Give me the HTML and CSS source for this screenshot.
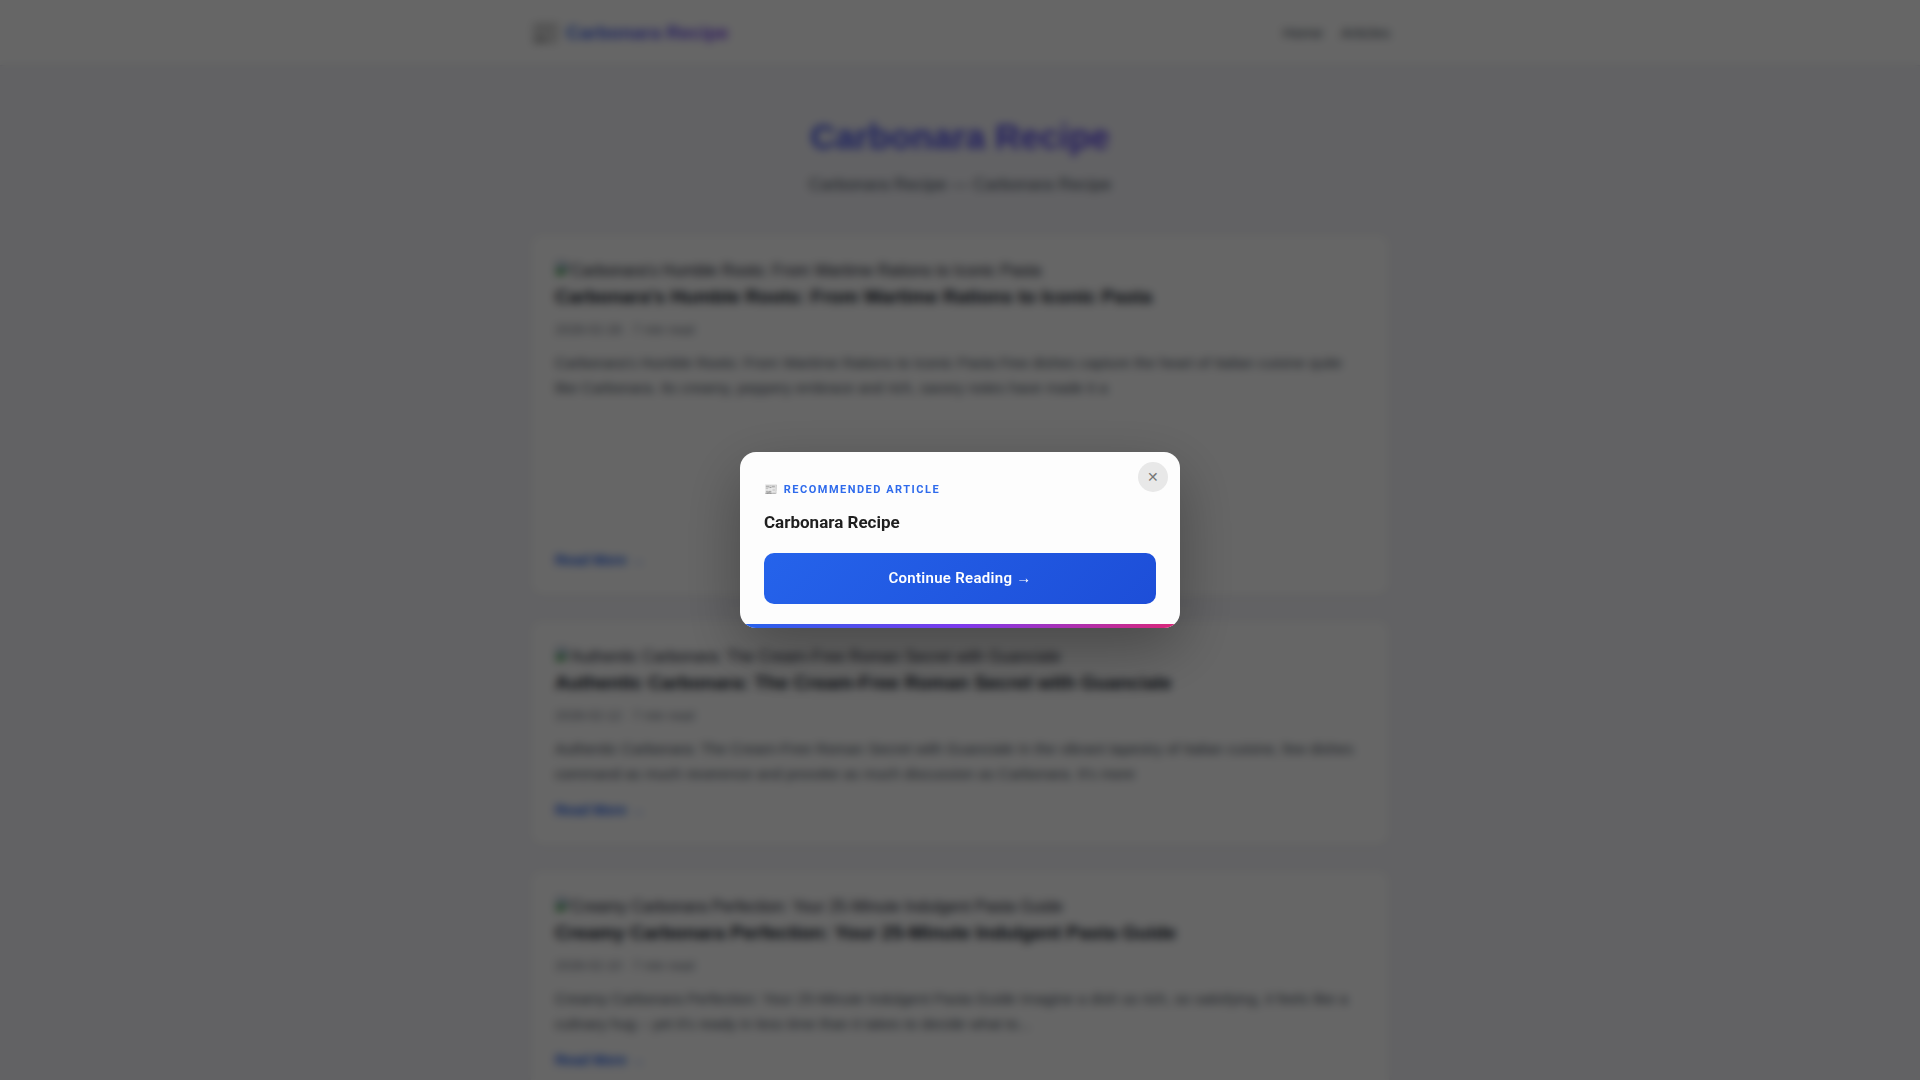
FILE: index.html
```html
<!DOCTYPE html>
<html lang="en">
<head>
    <meta charset="UTF-8">
    <meta name="viewport" content="width=device-width, initial-scale=1.0">
    <title>Carbonara Recipe</title>
    <link rel="stylesheet" href="styles.css">
</head>
<body>
    <!-- Shared placeholder for missing article images -->
    <svg class="sprite" aria-hidden="true">
        <symbol id="missing-image" viewBox="0 0 16 16">
            <path d="M1.5 1.5h9l4 4v9h-13z" fill="#c2d6f5" stroke="#9aa0a6"/>
            <path d="M10.5 1.5v4h4z" fill="#fff" stroke="#9aa0a6"/>
            <circle cx="5" cy="5" r="1.5" fill="#fff"/>
            <path d="M1 15V11l4-4 4 4 2-2 2 1-5 5z" fill="#43a047"/>
            <path d="M9 15l6-6v6z" fill="#fff"/>
        </symbol>
    </svg>

    <header class="site-header">
        <div class="container header-inner">
            <a href="#" class="logo"><span class="logo-icon">📰</span><span class="logo-text">Carbonara Recipe</span></a>
            <nav class="nav">
                <a href="#">Home</a>
                <a href="#">Articles</a>
            </nav>
        </div>
    </header>

    <main class="container">
        <section class="hero">
            <h1>Carbonara Recipe</h1>
            <p>Carbonara Recipe — Carbonara Recipe</p>
        </section>

        <div class="articles">
            <article class="card">
                <div class="card-image"><svg><use href="#missing-image"/></svg>Carbonara's Humble Roots: From Wartime Rations to Iconic Pasta</div>
                <h2>Carbonara's Humble Roots: From Wartime Rations to Iconic Pasta</h2>
                <div class="meta">2026-02-28 · 7 min read</div>
                <p class="excerpt">Carbonara's Humble Roots: From Wartime Rations to Iconic Pasta Few dishes capture the heart of Italian cuisine quite like Carbonara. Its creamy, peppery embrace and rich, savory notes have made it a</p>
                <div class="ad-slot"></div>
                <a href="#" class="read-more">Read More →</a>
            </article>

            <article class="card">
                <div class="card-image"><svg><use href="#missing-image"/></svg>Authentic Carbonara: The Cream-Free Roman Secret with Guanciale</div>
                <h2>Authentic Carbonara: The Cream-Free Roman Secret with Guanciale</h2>
                <div class="meta">2026-02-12 · 7 min read</div>
                <p class="excerpt">Authentic Carbonara: The Cream-Free Roman Secret with Guanciale In the vibrant tapestry of Italian cuisine, few dishes command as much reverence and provoke as much discussion as Carbonara. It's more</p>
                <a href="#" class="read-more">Read More →</a>
            </article>

            <article class="card">
                <div class="card-image"><svg><use href="#missing-image"/></svg>Creamy Carbonara Perfection: Your 25-Minute Indulgent Pasta Guide</div>
                <h2>Creamy Carbonara Perfection: Your 25-Minute Indulgent Pasta Guide</h2>
                <div class="meta">2026-02-10 · 7 min read</div>
                <p class="excerpt">Creamy Carbonara Perfection: Your 25-Minute Indulgent Pasta Guide Imagine a dish so rich, so satisfying, it feels like a culinary hug – yet it's ready in less time than it takes to decide what to...</p>
                <a href="#" class="read-more">Read More →</a>
            </article>
        </div>
    </main>

    <!-- Recommended article popup -->
    <div class="overlay" id="overlay">
        <div class="modal" role="dialog" aria-modal="true" aria-labelledby="modalTitle">
            <button class="modal-close" id="closeModal" aria-label="Close">✕</button>
            <div class="modal-label">📰 Recommended Article</div>
            <h3 class="modal-title" id="modalTitle">Carbonara Recipe</h3>
            <a href="#" class="modal-button">Continue Reading →</a>
        </div>
    </div>

    <script>
        document.getElementById('closeModal').addEventListener('click', function () {
            document.getElementById('overlay').classList.add('hidden');
            document.body.style.overflow = 'auto';
        });
    </script>
</body>
</html>
```
FILE: styles.css
```css
* {
    box-sizing: border-box;
    margin: 0;
    padding: 0;
}

body {
    font-family: "Liberation Sans", Arial, sans-serif;
    font-size: 16px;
    line-height: 26px;
    color: #1f2937;
    background: #f5f5fa;
    overflow: hidden;
}

a {
    text-decoration: none;
}

.sprite {
    display: none;
}

.container {
    max-width: 900px;
    margin: 0 auto;
    padding: 0 20px;
}

.site-header {
    background: #fff;
    border-bottom: 1px solid #e5e7eb;
}

.header-inner {
    display: flex;
    justify-content: space-between;
    align-items: center;
    height: 65px;
}

.logo {
    display: flex;
    align-items: center;
    gap: 6px;
    font-size: 19px;
    font-weight: 700;
    color: #1f2937;
}

.logo-icon {
    font-size: 24px;
}

.logo-text,
.hero h1 {
    background: linear-gradient(135deg, #2563eb, #7c3aed);
    -webkit-background-clip: text;
    background-clip: text;
    color: transparent;
}

.nav {
    display: flex;
    gap: 18px;
    font-size: 15px;
    font-weight: 500;
}

.nav a {
    color: #4b5563;
}

.hero {
    padding: 48px 0 36px;
    text-align: center;
}

.hero h1 {
    margin-bottom: 12px;
    font-size: 35px;
    line-height: 46px;
}

.hero p {
    font-size: 17px;
    color: #4b5563;
}

.articles {
    display: flex;
    flex-direction: column;
    gap: 24px;
}

.card {
    display: flex;
    flex-direction: column;
    align-items: flex-start;
    padding: 24px 24px 23px;
    background: #fff;
    border: 1px solid #f3f4f6;
    border-radius: 12px;
    box-shadow: 0 2px 8px rgba(0, 0, 0, 0.04);
}

.card-image {
    line-height: 24px;
}

.card-image svg {
    width: 16px;
    height: 16px;
}

.card h2 {
    margin-bottom: 8px;
    font-size: 19px;
    line-height: 28px;
    color: #111827;
}

.meta {
    margin-bottom: 9px;
    font-size: 13px;
    line-height: 22px;
    color: #6b7280;
}

.excerpt {
    margin-bottom: 13px;
    font-size: 15px;
    line-height: 25px;
    color: #4b5563;
}

.ad-slot {
    width: 100%;
    min-height: 136px;
}

.read-more {
    font-size: 14px;
    line-height: 23px;
    font-weight: 600;
    color: #2563eb;
}

.overlay {
    position: fixed;
    inset: 0;
    z-index: 1000;
    display: flex;
    justify-content: center;
    align-items: center;
    background: rgba(0, 0, 0, 0.6);
    backdrop-filter: blur(4px);
    font-family: Roboto, sans-serif;
}

.overlay.hidden {
    display: none;
}

.modal {
    position: relative;
    width: 440px;
    max-width: 92%;
    padding: 29px 24px 24px;
    background: #fdfdfd;
    border-radius: 16px;
    box-shadow: 0 20px 60px rgba(0, 0, 0, 0.3);
    overflow: hidden;
}

.modal::after {
    content: "";
    position: absolute;
    left: 0;
    right: 0;
    bottom: 0;
    height: 4px;
    background: linear-gradient(90deg, #2563eb, #7c3aed, #db2777);
}

.modal-close {
    position: absolute;
    top: 10px;
    right: 12px;
    width: 30px;
    height: 30px;
    border: none;
    border-radius: 50%;
    background: #e8e8e8;
    color: #777;
    font-family: Roboto, sans-serif;
    font-size: 14px;
    cursor: pointer;
}

.modal-label {
    margin-bottom: 11px;
    font-size: 11px;
    line-height: 18px;
    font-weight: 700;
    letter-spacing: 1.5px;
    text-transform: uppercase;
    color: #2f6bec;
}

.modal-title {
    margin-bottom: 18px;
    font-size: 17px;
    line-height: 25px;
    font-weight: 700;
    color: #1f1f1f;
}

.modal-button {
    display: block;
    padding: 13px 24px;
    border-radius: 10px;
    background: linear-gradient(135deg, #2563eb, #1d4ed8);
    color: #fff;
    font-size: 15px;
    line-height: 25px;
    font-weight: 600;
    letter-spacing: 0.3px;
    text-align: center;
}
```
